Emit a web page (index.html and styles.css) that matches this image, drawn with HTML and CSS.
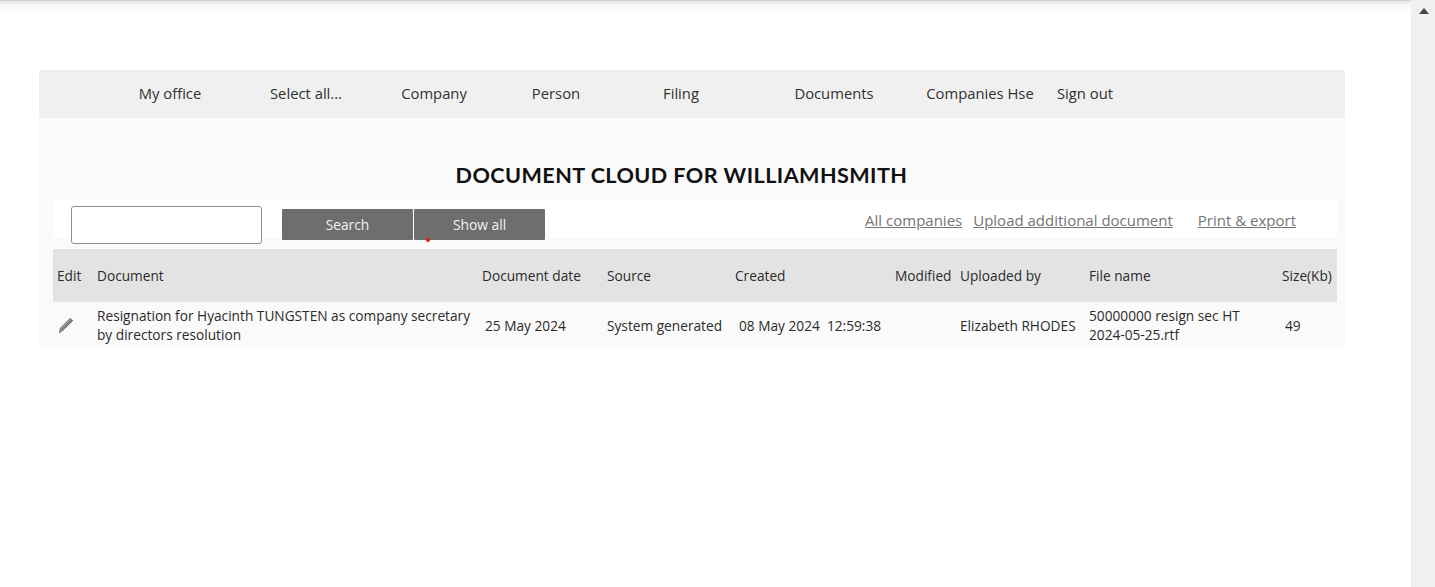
FILE: index.html
```html
<!DOCTYPE html>
<html lang="en">
<head>
<meta charset="utf-8">
<title>Document cloud</title>
<link rel="stylesheet" href="styles.css">
</head>
<body>
<div class="viewport">
  <main class="page">
    <div class="panel">
      <nav class="nav">
        <a>My office</a><a>Select all...</a><a>Company</a><a>Person</a><a>Filing</a><a>Documents</a><a>Companies Hse</a><a>Sign out</a>
      </nav>
      <h1 class="title">DOCUMENT CLOUD FOR WILLIAMHSMITH</h1>
      <div class="toolbar">
        <div class="search-group">
          <input class="search-input" type="text" aria-label="Search">
          <div class="buttons">
            <button class="btn">Search</button><button class="btn">Show all</button>
          </div>
          <span class="dot"></span>
        </div>
        <div class="links">
          <a class="link-companies">All companies</a>
          <a class="link-upload">Upload additional document</a>
          <a class="link-print">Print &amp; export</a>
        </div>
      </div>
      <table class="docs">
        <colgroup>
          <col class="c-edit"><col class="c-doc"><col class="c-date"><col class="c-source"><col class="c-created"><col class="c-mod"><col class="c-by"><col class="c-file"><col class="c-size">
        </colgroup>
        <thead>
          <tr><th>Edit</th><th>Document</th><th>Document date</th><th>Source</th><th>Created</th><th>Modified</th><th>Uploaded by</th><th>File name</th><th>Size(Kb)</th></tr>
        </thead>
        <tbody>
          <tr>
            <td><svg class="pencil" viewBox="0 0 16 17" width="16" height="17" aria-hidden="true"><path d="M12 1 15.4 3.4 5 13.8 0.8 16.4 2 11Z" fill="#7a7a7a"/><path d="M2 11 0.8 16.4 5 13.8Z" fill="#8f8f8f"/><path d="M3.4 11.6 12.4 2.6" stroke="#bdbdbd" stroke-width=".8" fill="none"/></svg></td>
            <td>Resignation for Hyacinth TUNGSTEN as company secretary by directors resolution</td>
            <td class="inset">25 May 2024</td>
            <td>System generated</td>
            <td class="inset-wide">08 May 2024&nbsp; 12:59:38</td>
            <td></td>
            <td>Elizabeth RHODES</td>
            <td>50000000 resign sec HT<br>2024-05-25.rtf</td>
            <td class="inset">49</td>
          </tr>
        </tbody>
      </table>
    </div>
  </main>
  <aside class="scrollbar"><span class="arrow"></span></aside>
</div>
</body>
</html>
```
FILE: styles.css
```css
* { box-sizing: border-box; }
html, body { margin: 0; height: 100%; overflow: hidden; background: #fff; }
body { font-family: "Open Sans", "Liberation Sans", sans-serif; font-size: 13.7px; color: #2b2b2b; }
.viewport { display: flex; height: 587px; position: relative; }
.viewport::before { content: ""; position: absolute; left: 0; right: 0; top: 0; height: 12px; background: linear-gradient(#bdbdbd 0, #e6e6e6 1px, #f7f7f7 5px, #fff 12px); }
.page { flex: 1; padding: 70px 66px 0 39px; min-width: 0; }
.panel { background: #fafafa; height: 279px; }
.nav { display: grid; grid-template-columns: 140px 132px 124px 120px 130px 176px 116px 94px; height: 48px; padding: 0 0 2px 61px; background: #f0f0f0; align-items: center; text-align: center; color: #303030; font-size: 14.8px; }
.title { margin: 0; padding: 43px 21px 0 0; height: 82px; font-family: Lato, "Liberation Sans", sans-serif; font-weight: 700; font-size: 21.6px; letter-spacing: .43px; line-height: 29px; text-align: center; color: #111; }
.toolbar { margin: 0 8px 0 14px; height: 38px; background: #fff; display: flex; justify-content: space-between; position: relative; }
.search-group { display: flex; padding: 6px 0 0 18px; position: relative; }
.search-input { width: 191px; height: 38px; border: 1px solid #8f8f8f; border-radius: 3px; background: #fff; margin: 0 1px 0 0; position: relative; z-index: 1; }
.buttons { display: flex; margin: 3px 0 0 19px; gap: 1px; }
.btn { width: 131px; height: 31px; border: 0; border-radius: 1px; background: #6e6e6e; color: #f2f2f2; font: 13.8px "Open Sans", "Liberation Sans", sans-serif; padding: 0; }
.dot { position: absolute; left: 373px; top: 38px; width: 4px; height: 4px; border-radius: 50%; background: #e8141c; z-index: 2; }
.links { display: flex; padding: 10px 41px 0 0; font-size: 15px; line-height: 21px; color: #757575; }
.links a { text-decoration: underline; }
.link-upload { margin-left: 11px; }
.link-print { margin-left: 25px; }
.docs { margin: 11px 8px 0 14px; width: 1284px; table-layout: fixed; border-collapse: collapse; }
.docs th { height: 53px; padding: 0 0 1px 4px; background: #e3e3e3; font-weight: 400; text-align: left; white-space: nowrap; }
.docs td { height: 47px; padding: 0 0 1px 4px; line-height: 19px; vertical-align: middle; }
.docs td.inset { padding-left: 7px; }
.docs td.inset-wide { padding-left: 8px; }
.c-edit { width: 40px; } .c-doc { width: 385px; } .c-date { width: 125px; } .c-source { width: 128px; }
.c-created { width: 160px; } .c-mod { width: 65px; } .c-by { width: 129px; } .c-file { width: 193px; } .c-size { width: 59px; }
.pencil { display: block; margin-left: 1px; }
.scrollbar { width: 24px; background: #f0f0f0; position: relative; z-index: 1; flex: none; }
.arrow { position: absolute; left: 8px; top: 8px; width: 0; height: 0; border-left: 5.5px solid transparent; border-right: 5.5px solid transparent; border-bottom: 6px solid #444; }
```
